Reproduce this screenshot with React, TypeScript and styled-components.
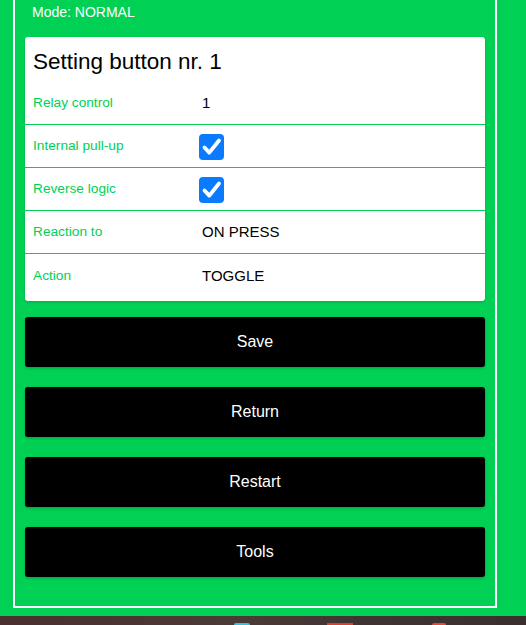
import React from "react";
import styled, { createGlobalStyle } from "styled-components";

const GREEN = "#00d154";

const Global = createGlobalStyle`
  html, body {
    margin: 0;
    padding: 0;
    background: ${GREEN};
    font-family: "Liberation Sans", Arial, sans-serif;
    overflow: hidden;
  }
`;

const Page = styled.div`
  width: 526px;
  height: 625px;
  display: flex;
  flex-direction: column;
  background: ${GREEN};
`;

const Frame = styled.div`
  margin-left: 13px;
  width: 484px;
  box-sizing: border-box;
  border: 2px solid #fff;
  border-top: 0;
  padding: 0 10px 29px;
  display: flex;
  flex-direction: column;
`;

const Mode = styled.div`
  height: 37px;
  box-sizing: border-box;
  padding: 3px 0 0 7px;
  color: #fff;
  font-size: 14px;
  line-height: 18px;
`;

const Card = styled.div`
  background: #fff;
  border-radius: 3px;
  box-shadow: 0 1px 3px rgba(0, 0, 0, 0.18);
  padding-bottom: 4px;
`;

const Title = styled.h2`
  margin: 0;
  height: 45px;
  box-sizing: border-box;
  padding: 12px 0 0 8px;
  font-size: 22.5px;
  font-weight: normal;
  line-height: 26px;
  color: #000;
`;

const Row = styled.div<{ $last?: boolean }>`
  display: grid;
  grid-template-columns: 167px 1fr;
  align-items: center;
  height: 43px;
  box-sizing: border-box;
  padding-left: 8px;
  padding-bottom: 1px;
  border-bottom: ${(p) => (p.$last ? "0" : `1px solid ${GREEN}`)};
`;

const Label = styled.span`
  color: ${GREEN};
  font-size: 13.7px;
`;

const Value = styled.span`
  color: #000;
  font-size: 15px;
  padding-left: 2px;
`;

const Check = styled.span`
  width: 25px;
  height: 26px;
  margin-left: -1px;
  margin-top: 3px;
  border-radius: 4px;
  background: #0a7bff;
  display: flex;
  align-items: center;
  justify-content: center;
`;

const Buttons = styled.div`
  margin-top: 16px;
  display: flex;
  flex-direction: column;
  gap: 20px;
`;

const Button = styled.button`
  height: 50px;
  border: 0;
  border-radius: 3px;
  background: #000;
  color: #fff;
  font-family: "Liberation Sans", Arial, sans-serif;
  font-size: 16px;
  box-shadow: 0 1px 3px rgba(0, 0, 0, 0.25);
  cursor: pointer;
`;

const Taskbar = styled.div`
  margin-top: auto;
  height: 9px;
  background: linear-gradient(90deg, #4a3030 0%, #4b3a37 45%, #3f3432 70%, #3a2f2e 100%);
  display: flex;
  align-items: flex-start;
  padding-left: 234px;
`;

const Dot = styled.span<{ $c: string; $w: number; $ml: number; $r?: boolean }>`
  margin-left: ${(p) => p.$ml}px;
  width: ${(p) => p.$w}px;
  height: 2px;
  margin-top: 7px;
  background: ${(p) => p.$c};
  border-radius: ${(p) => (p.$r ? "4px 4px 0 0" : "0")};
`;

const CheckIcon = () => (
  <svg width="25" height="26" viewBox="0 0 25 26">
    <path
      d="M5.5 13.5 L10.3 18.6 L20 6.5"
      fill="none"
      stroke="#fff"
      strokeWidth="3.8"
      strokeLinecap="round"
      strokeLinejoin="round"
    />
  </svg>
);

export default function App() {
  return (
    <>
      <Global />
      <Page>
        <Frame>
          <Mode>Mode: NORMAL</Mode>
          <Card>
            <Title>Setting button nr. 1</Title>
            <Row>
              <Label>Relay control</Label>
              <Value>1</Value>
            </Row>
            <Row>
              <Label>Internal pull-up</Label>
              <Check>
                <CheckIcon />
              </Check>
            </Row>
            <Row>
              <Label>Reverse logic</Label>
              <Check>
                <CheckIcon />
              </Check>
            </Row>
            <Row>
              <Label>Reaction to</Label>
              <Value>ON PRESS</Value>
            </Row>
            <Row $last>
              <Label>Action</Label>
              <Value>TOGGLE</Value>
            </Row>
          </Card>
          <Buttons>
            <Button>Save</Button>
            <Button>Return</Button>
            <Button>Restart</Button>
            <Button>Tools</Button>
          </Buttons>
        </Frame>
        <Taskbar>
          <Dot $c="#33c3e0" $w={16} $ml={0} $r />
          <Dot $c="#d84030" $w={26} $ml={77} />
          <Dot $c="#e04a38" $w={14} $ml={79} $r />
        </Taskbar>
      </Page>
    </>
  );
}
